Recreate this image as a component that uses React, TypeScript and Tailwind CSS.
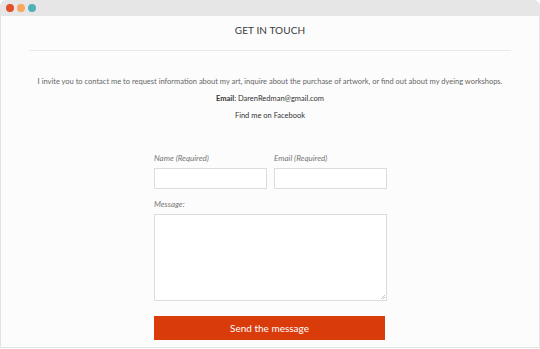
import React from 'react';

const FONT = { fontFamily: 'Lato, "Open Sans", sans-serif' };

export default function App() {
  return (
    <div className="w-[540px] h-[349px] bg-white" style={FONT}>
      <div className="w-[540px] h-[348px] flex flex-col rounded-t-[6px] overflow-hidden border-r border-b border-l border-[#e4e4e4] bg-[#fcfcfc]">
        {/* title bar */}
        <div className="h-[16px] shrink-0 bg-[#e6e6e6] flex items-center gap-[3px] pl-[5px]">
          <span className="w-[8px] h-[8px] rounded-full bg-[#e0502a]" />
          <span className="w-[8px] h-[8px] rounded-full bg-[#f7a85c]" />
          <span className="w-[8px] h-[8px] rounded-full bg-[#4fb0b9]" />
        </div>

        <div className="flex flex-col items-center">
          <h1 className="mt-[6px] h-[16px] text-[10px] leading-[16px] text-[#3a3a3a] tracking-[0.1px]">GET IN TOUCH</h1>
          <div className="mt-[12px] w-[482px] h-px bg-[#e8e8e8]" />

          <p className="mt-[26px] text-[7.5px] leading-[10px] text-[#666]">
            I invite you to contact me to request information about my art, inquire about the purchase of artwork, or find out about my dyeing workshops.
          </p>
          <p className="mt-[7px] text-[7.5px] leading-[10px] text-[#333]">
            <span className="font-bold">Email</span>: DarenRedman@gmail.com
          </p>
          <p className="mt-[7px] text-[7.5px] leading-[10px] text-[#333]">Find me on Facebook</p>

          <form className="mt-[32px] w-[234px] pl-[1px] flex flex-col" onSubmit={(e) => e.preventDefault()}>
            <div className="flex gap-[7px]">
              <label className="flex flex-col w-[113px]">
                <span className="text-[8px] leading-[10px] italic text-[#777]">Name (Required)</span>
                <input className="mt-[5px] h-[21px] w-[113px] border border-[#dcdcdc] bg-white outline-none" />
              </label>
              <label className="flex flex-col w-[113px]">
                <span className="text-[8px] leading-[10px] italic text-[#777]">Email (Required)</span>
                <input className="mt-[5px] h-[21px] w-[113px] border border-[#dcdcdc] bg-white outline-none" />
              </label>
            </div>
            <label className="mt-[10px] flex flex-col">
              <span className="text-[8px] leading-[10px] italic text-[#777]">Message:</span>
              <div className="relative mt-[5px] h-[87px] w-[233px]">
                <textarea className="h-full w-full border border-[#dcdcdc] bg-white outline-none resize-none block" />
                <svg className="absolute right-[2px] bottom-[2px]" width="5" height="5" viewBox="0 0 5 5">
                  <path d="M1 5 L5 1 M3 5 L5 3" stroke="#b5b5b5" strokeWidth="0.8" />
                </svg>
              </div>
            </label>
            <button
              type="submit"
              className="mt-[15px] h-[24px] w-[231px] bg-[#d93b0b] text-white text-[10px] leading-[24px]"
            >
              Send the message
            </button>
          </form>
        </div>
      </div>
    </div>
  );
}
